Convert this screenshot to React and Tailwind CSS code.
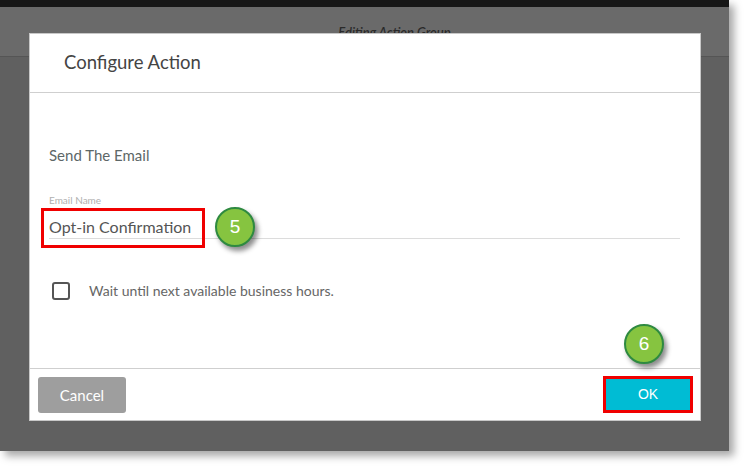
import React from 'react';

function Badge({ n, className }) {
  return (
    <div
      className={`absolute w-[40px] h-[40px] rounded-full bg-[#86c440] border-2 border-[#2e8a40] shadow-[3px_4px_5px_rgba(0,0,0,0.45)] flex items-center justify-center text-white text-[19px] font-['Liberation_Sans',sans-serif] ${className}`}
    >
      {n}
    </div>
  );
}

export default function App() {
  return (
    <div className="w-[744px] h-[466px] bg-white overflow-hidden font-['Lato',sans-serif]">
      <div className="relative w-[729px] h-[451px] bg-[#606060] shadow-[5px_5px_8px_rgba(0,0,0,0.35)]">
        {/* page behind the overlay */}
        <div className="h-[7px] bg-[#171717]" />
        <div className="h-[50px] bg-[#6a6a6a] border-b border-[#555] flex justify-center pt-[16px]">
          <span className="text-[13px] italic font-semibold text-[#2a2a2a] pl-[60px]">Editing Action Group</span>
        </div>

        {/* modal */}
        <div className="absolute left-[29px] top-[33px] w-[672px] h-[388px] bg-white border border-[#c8c8c8] flex flex-col">
          <div className="h-[59px] border-b border-[#cfcfcf] flex items-center pl-[34px]">
            <h1 className="text-[18.5px] text-[#444]">Configure Action</h1>
          </div>

          <div className="flex-1 pl-[19px] pt-[52px]">
            <div className="text-[15px] leading-[20px] text-[#5d6767]">Send The Email</div>
            <div className="mt-[29px] text-[10px] leading-[12px] text-[#b0b0b0]">Email Name</div>
            <div className="relative mt-[9px] w-[631px] border-b border-[#dcdcdc]">
              <div className="text-[16px] leading-[23px] text-[#555]">Opt-in Confirmation</div>
              <div className="absolute left-[-8px] top-[-7px] w-[164px] h-[40px] border-[3px] border-[#f00000]" />
            </div>
            <div className="mt-[41px] flex items-center pl-[3px]">
              <div className="w-[18px] h-[18px] border-2 border-[#555] rounded-[3px]" />
              <span className="ml-[19px] text-[14px] text-[#666]">Wait until next available business hours.</span>
            </div>
          </div>

          <div className="h-[52px] border-t border-[#cfcfcf] flex items-start justify-between pt-[8px] pl-[8px] pr-[7px]">
            <button className="w-[88px] h-[36px] rounded-[3px] bg-[#9e9e9e] text-white text-[15px]">Cancel</button>
            <button className="w-[90px] h-[37px] border-[3px] border-[#f00000] bg-[#00bcd4] text-white text-[14px] font-['Liberation_Sans',sans-serif] -mt-[1px]">OK</button>
          </div>
        </div>

        <Badge n="5" className="left-[215px] top-[207px]" />
        <Badge n="6" className="left-[624px] top-[324px]" />
      </div>
    </div>
  );
}
